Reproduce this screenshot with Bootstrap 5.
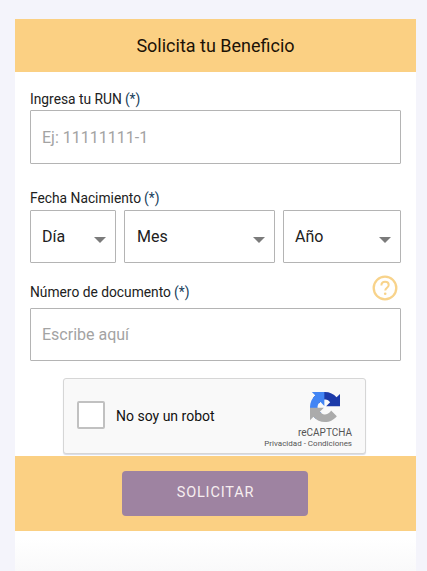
<!DOCTYPE html>
<html lang="es">
<head>
<meta charset="utf-8">
<title>Solicita tu Beneficio</title>
<link rel="stylesheet" href="https://cdn.jsdelivr.net/npm/bootstrap@5.3.0/dist/css/bootstrap.min.css">
<style>
html,body{height:571px;overflow:hidden}
body{background:#f4f4fb;font-family:Roboto,"Liberation Sans",sans-serif;color:#1a1a1a;padding:19px 11px 0 15px}
.sheet{background:linear-gradient(#fff 0,#fff 520px,#f9f9fa 552px);height:552px;width:401px}
.head-band{background:#fbd083;height:53px;font-size:18px;color:#1c1206;line-height:53px}
.form-area{padding:19px 15px 0}
.lbl{font-size:13.8px;line-height:16px;margin:0 0 3px;color:#212121;height:16px;white-space:nowrap}
.lbl-b{margin-bottom:4px}
.lbl-c{margin-bottom:8px}
.req{color:#17405c;margin-left:3px}
.fld{height:54px;border:1px solid #b4b4b4;border-radius:1px;font-size:16px;padding:0 11px;color:#212121;box-shadow:none}
.fld-c{height:53px}
.fld::placeholder{color:#a3a3a3;opacity:1}
.sel-row{height:53px;gap:8px}
.sel{height:53px;border:1px solid #b4b4b4;border-radius:1px;padding:1px 12px 0 11px;font-size:16px;color:#212121;position:relative}
.sel::after{content:"";position:absolute;right:9px;top:26px;border-left:6px solid transparent;border-right:6px solid transparent;border-top:6px solid #7b7b7b}
.sel-a{width:86px}.sel-b{width:151px;padding-left:12px}.sel-c{width:118px}
.gap-one{margin-top:26px}
.gap-two{margin-top:21px;position:relative}
.help-ic{position:absolute;right:3px;top:-9px;width:26px;height:26px}
.cap-box{width:303px;height:76px;margin:17px 0 0 48px;border:1px solid #d6d6d6;border-radius:3px;background:#f9f9f9;box-shadow:0 1px 1px #d8dbe6;padding:0 13px 0 13px}
.cap-check{width:28px;height:28px;border:2px solid #c1c1c1;border-radius:2px;background:#fff;margin-top:-3px}
.cap-text{font-size:14px;color:#111;margin-left:11px;margin-top:1px}
.cap-brand{text-align:right;color:#555;white-space:nowrap;padding-top:9px}
.cap-brand svg{display:block;margin:0 12px 5px auto}
.cap-name{font-size:10px;line-height:11px}
.cap-links{font-size:8px;line-height:10px;margin-top:1px}
.foot-band{background:#fbd083;height:75px;margin-top:2px}
.btn-send{width:186px;height:45px;background:#9e83a1;color:#f7eef0;border:0;border-radius:4px;font-size:14.5px;letter-spacing:.85px;padding:0 0 1px 1px;margin:15px 1px 0 0}
</style>
</head>
<body>
<main class="sheet">
  <div class="head-band text-center">Solicita tu Beneficio</div>
  <form class="form-area">
    <label class="lbl d-block" for="run">Ingresa tu RUN<span class="req">(*)</span></label>
    <input id="run" class="form-control fld" placeholder="Ej: 11111111-1">
    <div class="gap-one">
      <div class="lbl lbl-b">Fecha Nacimiento<span class="req">(*)</span></div>
      <div class="d-flex sel-row">
        <div class="sel sel-a d-flex align-items-center">Día</div>
        <div class="sel sel-b d-flex align-items-center">Mes</div>
        <div class="sel sel-c d-flex align-items-center">Año</div>
      </div>
    </div>
    <div class="gap-two">
      <label class="lbl lbl-c d-block" for="doc">Número de documento<span class="req">(*)</span></label>
      <svg class="help-ic" viewBox="0 0 26 26" aria-hidden="true"><circle cx="13" cy="13" r="11.3" fill="none" stroke="#f8d38b" stroke-width="2.3"/><path d="M9.4 10.4c0-2.200 1.600-3.600 3.700-3.600s3.600 1.300 3.600 3.200c0 2.600-3.500 2.800-3.500 5.600" fill="none" stroke="#f8d38b" stroke-width="2"/><circle cx="13.2" cy="18.8" r="1.3" fill="#f8d38b"/></svg>
      <input id="doc" class="form-control fld fld-c" placeholder="Escribe aquí">
    </div>
  </form>
  <div class="cap-box d-flex align-items-center justify-content-between">
    <div class="d-flex align-items-center">
      <div class="cap-check"></div>
      <div class="cap-text">No soy un robot</div>
    </div>
    <div class="cap-brand">
      <svg width="30" height="30" viewBox="0 0 32 32" aria-hidden="true">
        <path d="M32 16c0-.2 0-.5 0-.7V2l-3.700 3.700C25.300 2.200 20.900 0 16 0 10.900 0 6.300 2.500 3.400 6.200l6.100 6.100c.6-1.100 1.400-2.100 2.400-2.800 1-.8 2.500-1.500 4.100-1.500.2 0 .4 0 .5.100 2 .2 3.800 1.300 5 2.900L17.200 15.300c5.500 0 11.600 0 14.800 0" fill="#1c3aa9"/>
        <path d="M16 0c-.2 0-.5 0-.7 0H2l3.700 3.700C2.200 6.700 0 11.100 0 16c0 5.100 2.500 9.700 6.200 12.600l6.100-6.100c-1.100-.6-2.100-1.400-2.800-2.400-.8-1-1.500-2.500-1.500-4.100 0-.2 0-.4.1-.5.2-2 1.300-3.800 2.900-5L15.300 14.800c0-5.500 0-11.600 0-14.800" fill="#4285f4"/>
        <path d="M0 16c0 .2 0 .5 0 .7V30l3.700-3.700C6.700 29.800 11.100 32 16 32c5.100 0 9.700-2.500 12.600-6.200l-6.100-6.100c-.6 1.100-1.400 2.100-2.400 2.800-1 .8-2.500 1.500-4.100 1.500-.2 0-.4 0-.5-.1-2-.2-3.800-1.300-5-2.900L14.800 16.800c-5.500 0-11.600 0-14.800 0" fill="#ababab"/>
      </svg>
      <div class="cap-name">reCAPTCHA</div>
      <div class="cap-links">Privacidad - Condiciones</div>
    </div>
  </div>
  <div class="foot-band text-center"><button type="button" class="btn btn-send">SOLICITAR</button></div>
</main>
<script src="https://cdn.jsdelivr.net/npm/bootstrap@5.3.0/dist/js/bootstrap.bundle.min.js"></script>
</body>
</html>
